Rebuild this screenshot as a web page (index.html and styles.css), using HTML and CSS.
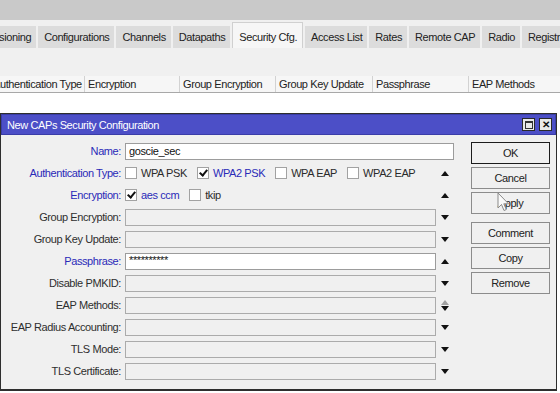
FILE: index.html
```html
<!DOCTYPE html>
<html lang="en">
<head>
  <meta charset="UTF-8">
  <title>CAPsMAN - Security Cfg.</title>
  <link rel="stylesheet" href="styles.css">
</head>
<body>

  <!-- main window behind the dialog -->
  <div class="app">
    <div class="topbar"></div>
    <div class="tabs">
      <div class="tab-strip">
        <span class="tab">Provisioning</span>
        <span class="tab">Configurations</span>
        <span class="tab">Channels</span>
        <span class="tab">Datapaths</span>
        <span class="tab active">Security Cfg.</span>
        <span class="tab">Access List</span>
        <span class="tab">Rates</span>
        <span class="tab">Remote CAP</span>
        <span class="tab">Radio</span>
        <span class="tab">Registration Table</span>
      </div>
    </div>
    <div class="toolbar"></div>
    <div class="columns">
      <div class="col w95">Authentication Type</div>
      <div class="col w95">Encryption</div>
      <div class="col w96">Group Encryption</div>
      <div class="col w97">Group Key Update</div>
      <div class="col w96">Passphrase</div>
      <div class="col w96">EAP Methods</div>
    </div>
    <div class="list"></div>
  </div>

  <!-- dialog -->
  <div class="window">
    <div class="titlebar">
      <span class="title">New CAPs Security Configuration</span>
      <div class="wbtns">
        <span class="wbtn max"><i></i></span>
        <span class="wbtn close">&#x2715;</span>
      </div>
    </div>

    <div class="wbody">
      <div class="form">
        <div class="row">
          <label class="lbl blue">Name:</label>
          <div class="field"><div class="input white">goscie_sec</div></div>
        </div>
        <div class="row">
          <label class="lbl blue">Authentication Type:</label>
          <div class="field">
            <div class="checks">
              <span class="chk"><i class="box"></i>WPA PSK</span>
              <span class="chk on"><i class="box"></i>WPA2 PSK</span>
              <span class="chk"><i class="box"></i>WPA EAP</span>
              <span class="chk"><i class="box"></i>WPA2 EAP</span>
            </div>
            <span class="arrow"><i class="up"></i></span>
          </div>
        </div>
        <div class="row">
          <label class="lbl blue">Encryption:</label>
          <div class="field">
            <div class="checks">
              <span class="chk on"><i class="box"></i>aes ccm</span>
              <span class="chk"><i class="box"></i>tkip</span>
            </div>
            <span class="arrow"><i class="up"></i></span>
          </div>
        </div>
        <div class="row">
          <label class="lbl">Group Encryption:</label>
          <div class="field"><div class="input"></div><span class="arrow"><i class="down"></i></span></div>
        </div>
        <div class="row">
          <label class="lbl">Group Key Update:</label>
          <div class="field"><div class="input"></div><span class="arrow"><i class="down"></i></span></div>
        </div>
        <div class="row">
          <label class="lbl blue">Passphrase:</label>
          <div class="field"><div class="input white pass">**********</div><span class="arrow"><i class="up"></i></span></div>
        </div>
        <div class="row">
          <label class="lbl">Disable PMKID:</label>
          <div class="field"><div class="input"></div><span class="arrow"><i class="down"></i></span></div>
        </div>
        <div class="row">
          <label class="lbl">EAP Methods:</label>
          <div class="field"><div class="input"></div><span class="arrow stack"><i class="up gray"></i><i class="down"></i></span></div>
        </div>
        <div class="row">
          <label class="lbl">EAP Radius Accounting:</label>
          <div class="field"><div class="input"></div><span class="arrow"><i class="down"></i></span></div>
        </div>
        <div class="row">
          <label class="lbl">TLS Mode:</label>
          <div class="field"><div class="input"></div><span class="arrow"><i class="down"></i></span></div>
        </div>
        <div class="row">
          <label class="lbl">TLS Certificate:</label>
          <div class="field"><div class="input"></div><span class="arrow"><i class="down"></i></span></div>
        </div>
      </div>

      <div class="buttons">
        <button class="btn default">OK</button>
        <button class="btn">Cancel</button>
        <button class="btn apply">Apply
          <svg class="cursor" width="13" height="20" viewBox="0 0 13 20">
            <path d="M1 1 L1 16 L4.5 12.5 L7 18.5 L9.3 17.5 L6.8 11.8 L11.5 11.8 Z" fill="#fafafa" stroke="#8a8a8a" stroke-width="1"/>
          </svg>
        </button>
        <button class="btn gap">Comment</button>
        <button class="btn">Copy</button>
        <button class="btn">Remove</button>
      </div>
    </div>
  </div>

</body>
</html>
```

FILE: styles.css
```css
/* base */
* { box-sizing: border-box; margin: 0; padding: 0; }
html, body { height: 100%; }
body {
  font-family: "Liberation Sans", Arial, sans-serif;
  font-size: 11px; letter-spacing: -0.4px;
  color: #2a2a2a; background: #f0f0f0;
  overflow: hidden;
}

/* main window */
.app { width: 560px; }
.topbar { height: 20px; background: #c9c9c9; }
.tabs { height: 28px; padding-top: 2px; background: #f0f0f0; overflow: hidden; }
.tab-strip { display: flex; align-items: flex-end; gap: 2px; margin-left: -30px; height: 26px; white-space: nowrap; }
.tab {
  height: 22px; line-height: 22px; padding: 0 5px 0 6px;
  background: #dcdcdc; color: #222;
}
.tab.active { height: 26px; line-height: 28px; background: #f6f6f6; border: 1px solid #d0d0d0; border-bottom: none; }
.toolbar { height: 28px; background: #f0f0f0; }
.columns {
  display: flex; height: 17px; margin-left: -10px;
  background: #f6f6f6; border-bottom: 1px solid #a8a8a8; white-space: nowrap;
}
.col { line-height: 16px; padding-left: 3px; border-right: 1px solid #d2d2d2; color: #222; flex: none; overflow: hidden; }
.w95 { width: 95px; } .w96 { width: 96px; } .w97 { width: 97px; }
.list { height: 320px; background: #fff; }

/* dialog */
.window {
  position: absolute; left: 0; top: 113px;
  width: 557px; height: 278px;
  background: #f0f0f0; border: 1px solid #2e2e2e; border-bottom-width: 2px;
}
.titlebar {
  height: 21px; background: #4c4fc7; color: #fff;
  display: flex; align-items: center; justify-content: space-between;
  padding: 0 3px 0 5px; border: 1px solid #3a3da8;
}
.title { font-size: 11px; }
.wbtns { display: flex; gap: 4px; }
.wbtn {
  width: 13px; height: 13px; background: #e9e9e9; border: 1px solid #2a2a2a;
  display: flex; align-items: center; justify-content: center;
  color: #111; font-size: 10px; font-weight: bold; letter-spacing: 0;
}
.wbtn.max i { width: 8px; height: 8px; border: 1px solid #333; border-top-width: 2px; }

.wbody { display: flex; padding-top: 5px; }
.form { width: 454px; }
.row { display: flex; align-items: center; height: 22px; }
.lbl { width: 120px; text-align: right; color: #2e2e2e; }
.lbl.blue { color: #2a2ab8; }
.field { display: flex; align-items: center; width: 329px; margin-left: 4px; }
.input {
  flex: 1; height: 17px; line-height: 15px; padding: 0 3px;
  background: #f0f0f0; border: 1px solid #ababab; color: #111;
}
.input.white { background: #fff; border-color: #9c9c9c; }
.input.pass { line-height: 13px; }

.checks { flex: 1; display: flex; gap: 10px; height: 17px; align-items: center; }
.chk { display: flex; align-items: center; gap: 4px; color: #2a2a2a; }
.chk .box { width: 12px; height: 12px; background: #fff; border: 1px solid #a2a2a2; position: relative; }
.chk.on { color: #2a2ab8; }
.checks .chk:first-child { color: #2a2a2a; }
.checks .chk.on:first-child { color: #2a2ab8; }
.chk.on .box::after {
  content: ""; position: absolute; left: 3px; top: 0px;
  width: 3px; height: 6px; border: solid #111; border-width: 0 2px 2px 0;
  transform: rotate(40deg);
}

.arrow { width: 18px; height: 17px; display: flex; flex-direction: column; align-items: center; justify-content: center; gap: 1px; }
.arrow i { width: 0; height: 0; border-left: 4px solid transparent; border-right: 4px solid transparent; }
.arrow .up { border-bottom: 5px solid #111; }
.arrow .down { border-top: 5px solid #111; }
.arrow .up.gray { border-bottom-color: #a0a0a0; }

/* right buttons */
.buttons { display: flex; flex-direction: column; gap: 3px; margin-left: 16px; padding-top: 2px; }
.btn {
  width: 79px; height: 22px; background: #f0f0f0;
  border: 1px solid #8c8c8c; color: #222;
  font-family: inherit; font-size: 11px; letter-spacing: -0.4px;
}
.btn.default { border-color: #1c1c1c; }
.btn.gap { margin-top: 5px; }
.btn.apply { position: relative; }
.cursor { position: absolute; left: 25px; top: -1px; }
```
